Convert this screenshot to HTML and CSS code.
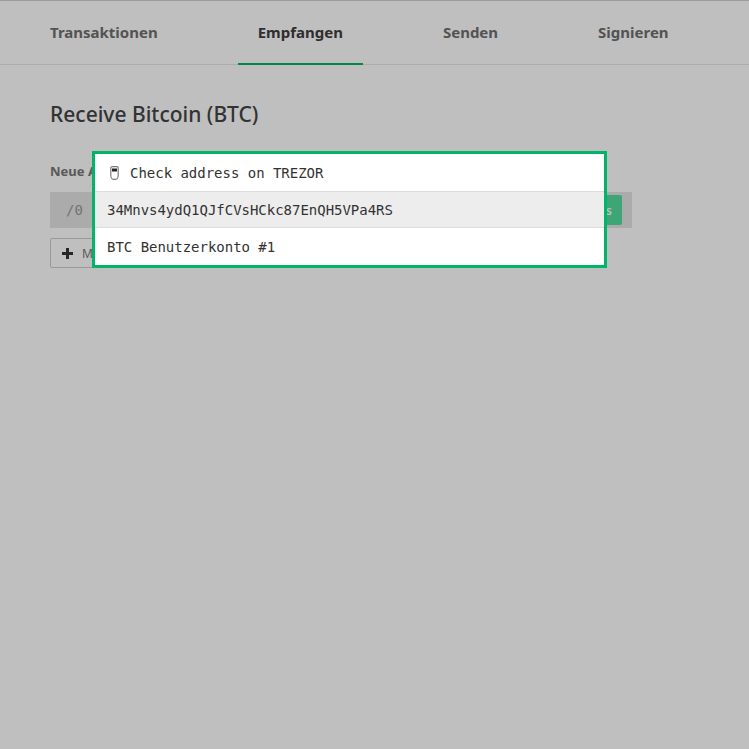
FILE: index.html

```html
<!DOCTYPE html>
<html lang="de">
<head>
    <meta charset="UTF-8">
    <title>Receive Bitcoin (BTC)</title>
    <link rel="stylesheet" href="styles.css">
</head>
<body>
    <nav class="tabs">
        <a class="tab">Transaktionen</a>
        <a class="tab active">Empfangen</a>
        <a class="tab">Senden</a>
        <a class="tab">Signieren</a>
    </nav>

    <main class="content">
        <h2 class="title">Receive Bitcoin (BTC)</h2>
        <div class="field-label">Neue Adresse</div>
        <div class="address-row">
            <span class="path">/0</span>
            <button class="show-btn">Show full address</button>
        </div>
        <button class="more-btn">
            <svg class="plus" width="11" height="11" viewBox="0 0 11 11">
                <path d="M4 0h3v4h4v3H7v4H4V7H0V4h4z" fill="#333"/>
            </svg>
            <span class="more-label">Mehr</span>
        </button>
    </main>

    <div class="overlay"></div>

    <div class="check-box">
        <div class="check-row">
            <svg class="device" width="9" height="14" viewBox="0 0 9 14">
                <path d="M2 .7h5a1.2 1.2 0 0 1 1.2 1.2v7.6c0 1.8-1.2 3.8-2.7 3.8h-2c-1.5 0-2.7-2-2.7-3.8V1.900a1.200 1.200 0 0 1 1.200-1.200z" fill="#fff" stroke="#7a7a7a" stroke-width="1.2"/>
                <rect x="2" y="2.500" width="5" height="3" fill="#222"/>
            </svg>
            <span>Check address on TREZOR</span>
        </div>
        <div class="check-row address">34Mnvs4ydQ1QJfCVsHCkc87EnQH5VPa4RS</div>
        <div class="check-row">BTC Benutzerkonto #1</div>
    </div>
</body>
</html>
```

FILE: styles.css

```css
body {
    font-family: "Noto Sans", sans-serif;
    background-color: #fff;
    color: #333;
    margin: 0;
    padding: 0;
    height: 749px;
    overflow: hidden;
}

.tabs {
    display: flex;
    gap: 60px;
    height: 63px;
    padding-left: 30px;
    border-top: 1px solid #d0d0d0;
    border-bottom: 1px solid #e6e6e6;
}

.tab {
    height: 63px;
    padding: 0 20px;
    font-size: 15px;
    font-weight: 700;
    line-height: 62px;
    color: #6f6f6f;
}

.tab.active {
    color: #3e3e3e;
    height: 62px;
    border-bottom: 2px solid #01b757;
}

.content {
    padding: 0 50px;
}

.title {
    font-size: 21px;
    font-weight: 500;
    line-height: 28px;
    margin: 35px 0 0;
    color: #444;
}

.field-label {
    font-size: 13px;
    font-weight: 700;
    line-height: 18px;
    margin-top: 34px;
    color: #777;
}

.address-row {
    display: flex;
    align-items: center;
    justify-content: space-between;
    width: 582px;
    height: 36px;
    margin-top: 12px;
    padding: 0 10px 0 16px;
    box-sizing: border-box;
    background-color: #e4e4e4;
}

.path {
    font-family: "DejaVu Sans Mono", monospace;
    font-size: 14px;
    color: #999;
}

.show-btn {
    height: 30px;
    padding: 0 10px;
    border: none;
    border-radius: 2px;
    background-color: #53dc9f;
    color: #fff;
    font-family: inherit;
    font-size: 12px;
    font-weight: 600;
}

.more-btn {
    display: flex;
    align-items: center;
    height: 30px;
    margin-top: 10px;
    padding: 0 11px;
    border: 1px solid #ccc;
    border-radius: 2px;
    background-color: #fff;
    color: #777;
    font-family: inherit;
    font-size: 12px;
}

.plus {
    margin-right: 9px;
}

.overlay {
    position: absolute;
    top: 0;
    left: 0;
    width: 100%;
    height: 100%;
    background-color: rgba(0, 0, 0, 0.25);
}

.check-box {
    position: absolute;
    top: 151px;
    left: 92px;
    width: 509px;
    border: 3px solid #00b46a;
    background-color: #fff;
    font-family: "DejaVu Sans Mono", monospace;
    font-size: 14px;
    letter-spacing: -0.02px;
    color: #333;
}

.check-row {
    display: flex;
    align-items: center;
    height: 37px;
    padding: 0 12px;
}

.check-row.address {
    background-color: #ededed;
    border-top: 1px solid #dcdcdc;
    border-bottom: 1px solid #dcdcdc;
    height: 34px;
    padding-top: 1px;
}

.device {
    margin: 0 11px 0 3px;
}
```
